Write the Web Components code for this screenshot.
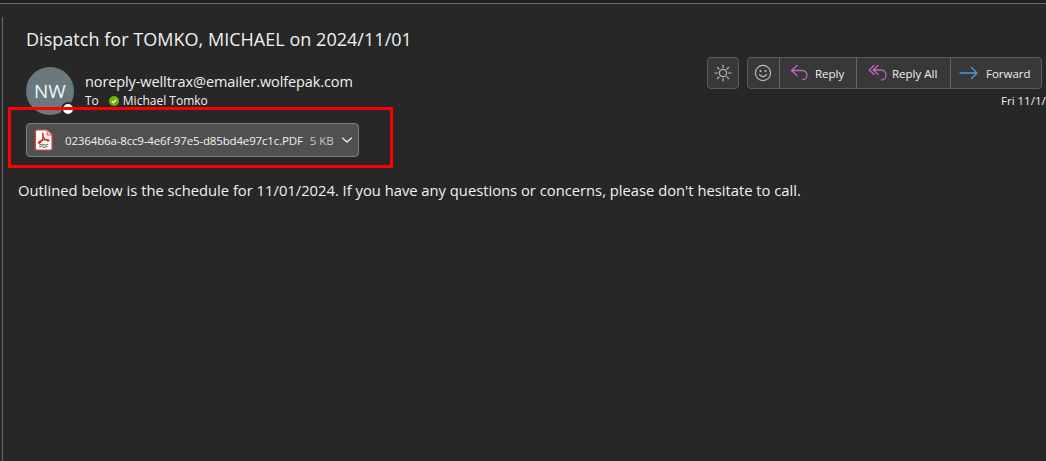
<!DOCTYPE html>
<html lang="en">
<head>
<meta charset="utf-8">
<title>Dispatch for TOMKO, MICHAEL on 2024/11/01</title>
<style>
  html, body { margin: 0; height: 100%; background: #272727; overflow: hidden; }
  body { font-family: "Open Sans", "Noto Sans", sans-serif; color: #f0f0f0; }
</style>
</head>
<body>
<mail-view>
  <span slot="subject">Dispatch for TOMKO, MICHAEL on 2024/11/01</span>
  <sender-avatar slot="avatar" initials="NW"></sender-avatar>
  <span slot="sender">noreply-welltrax@emailer.wolfepak.com</span>
  <span slot="recipient">Michael Tomko</span>
  <action-bar slot="actions"></action-bar>
  <span slot="date">Fri 11/1/</span>
  <attachment-chip slot="attachment" name="02364b6a-8cc9-4e6f-97e5-d85bd4e97c1c.PDF" size="5 KB"></attachment-chip>
  Outlined below is the schedule for 11/01/2024. If you have any questions or concerns, please don't hesitate to call.
</mail-view>

<script>
'use strict'

class SenderAvatar extends HTMLElement {
    constructor () {
        super()
        this.attachShadow({mode:'open'}).innerHTML = `
        <style>
            :host { display:block; position:relative; width:48px; height:48px; flex:none; }
            .circle {
                width:100%; height:100%;
                border-radius:50%;
                background:#69797e;
                color:#f2f6f7;
                display:flex; align-items:center; justify-content:center;
                font-size:19px;
            }
            /* presence dot sits over the avatar edge */
            .presence {
                position:absolute; left:35px; top:35px;
                width:10px; height:10px;
                border-radius:50%;
                background:#fff;
                border:2px solid #272727;
            }
        </style>
        <div class="circle"></div>
        <div class="presence"></div>`
    }
    connectedCallback () {
        this.shadowRoot.querySelector('.circle').textContent = this.getAttribute('initials')
    }
}
customElements.define('sender-avatar', SenderAvatar)

class ActionButton extends HTMLElement {
    constructor () {
        super()
        this.attachShadow({mode:'open'}).innerHTML = `
        <style>
            :host {
                display:flex; align-items:center; box-sizing:border-box; flex:none;
                height:100%;
                gap:var(--gap, 7px);
                padding:0 0 0 var(--pad, 10px);
                font-size:11.500px;
                white-space:nowrap;
                color:#f0f0f0;
                border-left:1px solid #666;
            }
            :host(:first-child) { border-left:0; }
            ::slotted(svg) { display:block; flex:none; }
        </style>
        <slot></slot>`
    }
}
customElements.define('action-button', ActionButton)

class ActionBar extends HTMLElement {
    constructor () {
        super()
        this.attachShadow({mode:'open'}).innerHTML = `
        <style>
            :host { display:flex; gap:8px; height:32px; }
            .box {
                display:flex; flex:none; box-sizing:border-box; height:32px;
                background:#383838;
                border:1px solid #5c5c5c;
                border-radius:4px;
            }
            .square { width:32px; align-items:center; justify-content:center; }
            svg { display:block; fill:none; stroke-linecap:round; stroke-linejoin:round; }
            .purple { stroke:#c764c7; stroke-width:1.3; }
            .blue { stroke:#4a9bd8; stroke-width:1.3; }
            .grey { stroke:#b8b8b8; stroke-width:1.2; }
            .smile { width:31px; --pad:6px; }
            .reply { width:77px; }
            .reply-all { width:94px; --pad:11px; --gap:5px; }
            .forward { width:91px; --gap:8px; --pad:8px; }
        </style>
        <div class="box square">
            <svg class="grey" width="20" height="20" viewBox="0 0 20 20">
                <circle cx="10" cy="10" r="3.6"/>
                <path d="M10 2v2.4M10 15.6V18M2 10h2.4M15.6 10H18M4.3 4.3 6 6M14 14l1.7 1.7M4.3 15.7 6 14M14 6l1.7-1.7"/>
            </svg>
        </div>
        <div class="box">
            <action-button class="smile">
                <svg class="grey" width="18" height="18" viewBox="0 0 18 18">
                    <circle cx="9" cy="9" r="7.6"/>
                    <path d="M5.6 10.6c.8 1.4 2 2.1 3.4 2.1s2.6-.7 3.4-2.1"/>
                    <circle cx="6.5" cy="7" r=".5"/><circle cx="11.5" cy="7" r=".5"/>
                </svg>
            </action-button>
            <action-button class="reply">
                <svg class="purple" width="18" height="18" viewBox="0 0 18 18">
                    <path d="M7 1.500 1.500 6.500 7 11.500M1.500 6.500h10.500c3 0 5 2 5 4.600s-2 4.600-4.500 4.600"/>
                </svg>
                <span>Reply</span>
            </action-button>
            <action-button class="reply-all">
                <svg class="purple" width="19" height="18" viewBox="0 0 19 18">
                    <path d="M6 1.500 1.200 6 6 10.500M10 1.500 5.200 6 10 10.500M5.200 6H13c3 0 5 2.200 5 5s-2 5-4.500 5"/>
                </svg>
                <span>Reply All</span>
            </action-button>
            <action-button class="forward">
                <svg class="blue" width="19" height="14" viewBox="0 0 19 14">
                    <path d="M1 7h17M12.500 1.500 18 7l-5.500 5.500"/>
                </svg>
                <span>Forward</span>
            </action-button>
        </div>`
    }
}
customElements.define('action-bar', ActionBar)

class AttachmentChip extends HTMLElement {
    constructor () {
        super()
        this.attachShadow({mode:'open'}).innerHTML = `
        <style>
            :host {
                display:inline-flex; align-items:center; box-sizing:border-box;
                width:333px; height:34px;
                padding:0 7px;
                background:#505050;
                border:1px solid #808080;
                border-radius:4px;
                font-size:11.500px;
                color:#f0f0f0;
            }
            .pdf { display:block; flex:none; margin-right:12px; }
            .name { white-space:nowrap; letter-spacing:-.15px; }
            .size { margin-left:7px; color:#c8c8c8; white-space:nowrap; }
            .chev { display:block; margin-left:7px; flex:none; }
        </style>
        <svg class="pdf" width="19" height="22" viewBox="0 0 19 22">
            <path d="M1.500 2.500a1.500 1.500 0 0 1 1.500-1.500H13l5 5v13.500a1.500 1.500 0 0 1-1.500 1.500H3A1.500 1.500 0 0 1 1.500 19.500z" fill="#fff" stroke="#e2423a" stroke-width="1.200"/>
            <path d="M13 1v5h5" fill="#f6d0cc" stroke="#e2423a" stroke-width=".9"/>
            <path d="M9.200 4.200c-.9 0-.8 1.700.2 3.800 1 2 2.200 3.300 4.200 3.800 1.400.3 1.800-.8.600-1-2-.4-5.200-.1-7.600 1-1.800.8-2.600 2-1.900 2.400.8.400 2.200-1 3.200-3 .9-1.900 2-7 .3-7z" fill="none" stroke="#e2231a" stroke-width="1.300"/>
            <text x="9.800" y="19.300" text-anchor="middle" font-size="4.600" font-weight="700" fill="#666" font-family="Liberation Sans, sans-serif">PDF</text>
        </svg>
        <span class="name"></span>
        <span class="size"></span>
        <svg class="chev" width="12" height="12" viewBox="0 0 12 12">
            <path d="M1.500 4 6 8 10.500 4" fill="none" stroke="#e8e8e8" stroke-width="1.400" stroke-linecap="round" stroke-linejoin="round"/>
        </svg>`
    }
    connectedCallback () {
        this.shadowRoot.querySelector('.name').textContent = this.getAttribute('name')
        this.shadowRoot.querySelector('.size').textContent = this.getAttribute('size')
    }
}
customElements.define('attachment-chip', AttachmentChip)

class MailView extends HTMLElement {
    constructor () {
        super()
        this.attachShadow({mode:'open'}).innerHTML = `
        <style>
            :host { display:flex; flex-direction:column; height:100vh; position:relative; overflow:hidden; }
            .top-line { height:3px; flex:none; background:#1e1e1e; border-bottom:1px solid #6a6a6a; }
            .pane {
                flex:1; margin:13px 0 0 2px;
                border-left:1px solid #6a6a6a;
                display:flex; flex-direction:column; min-width:0;
            }
            .subject { padding:10px 0 0 23px; font-size:18px; line-height:24px; letter-spacing:.03px; white-space:nowrap; }
            .head { display:flex; justify-content:space-between; margin-top:16px; padding-left:23px; height:56px; }
            .who { display:flex; gap:11px; }
            .lines { display:flex; flex-direction:column; padding-top:5px; }
            .sender { font-size:14.500px; line-height:20px; letter-spacing:-.1px; white-space:nowrap; }
            .to { display:flex; align-items:center; font-size:12px; line-height:18px; white-space:nowrap; }
            .check { display:block; margin:0 4px 0 10px; }
            .right { width:339px; flex:none; margin-top:-10px; }
            .date { font-size:11.500px; line-height:16px; margin-top:4px; padding-left:294px; white-space:nowrap; }
            .attach { padding-left:23px; }
            .attach ::slotted(*) { vertical-align:top; }
            .body { padding:23px 0 0 15px; font-size:14.750px; line-height:20px; white-space:nowrap; }
            /* annotation drawn on the screenshot, lies over the content */
            .mark {
                position:absolute; left:8px; top:107px;
                width:385px; height:61px; box-sizing:border-box;
                border:3px solid #f00;
                pointer-events:none;
            }
        </style>
        <div class="top-line"></div>
        <div class="pane">
            <div class="subject"><slot name="subject"></slot></div>
            <div class="head">
                <div class="who">
                    <slot name="avatar"></slot>
                    <div class="lines">
                        <div class="sender"><slot name="sender"></slot></div>
                        <div class="to">
                            <span>To</span>
                            <svg class="check" width="10" height="10" viewBox="0 0 10 10">
                                <circle cx="5" cy="5" r="5" fill="#6bb700"/>
                                <path d="M2.800 5.200 4.300 6.600 7.300 3.600" fill="none" stroke="#fff" stroke-width="1.200"/>
                            </svg>
                            <slot name="recipient"></slot>
                        </div>
                    </div>
                </div>
                <div class="right">
                    <slot name="actions"></slot>
                    <div class="date"><slot name="date"></slot></div>
                </div>
            </div>
            <div class="attach"><slot name="attachment"></slot></div>
            <div class="body"><slot></slot></div>
        </div>
        <div class="mark"></div>`
    }
}
customElements.define('mail-view', MailView)
</script>
</body>
</html>
